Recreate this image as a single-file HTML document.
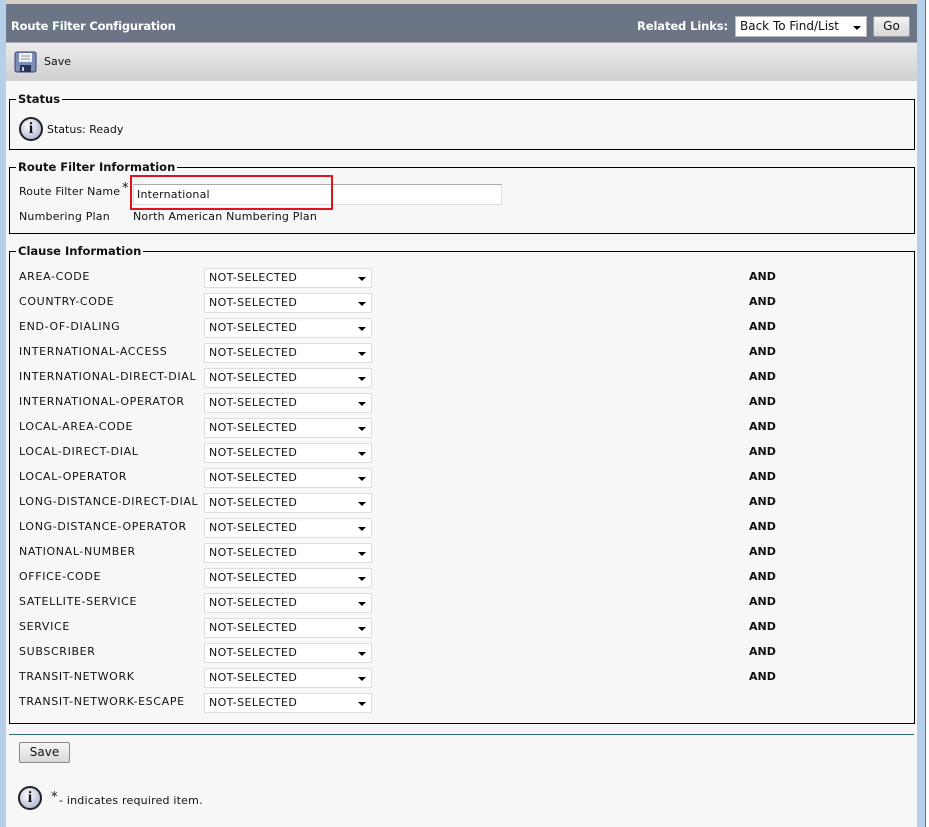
<!DOCTYPE html>
<html><head><meta charset="utf-8"><style>
*{margin:0;padding:0;box-sizing:border-box}
body{width:929px;height:827px;position:relative;background:#f7f7f7;font-family:"DejaVu Sans","Liberation Sans",sans-serif;font-size:11px;color:#111;overflow:hidden}
.a{position:absolute;white-space:nowrap}
.fs{position:absolute;border:1px solid #000}
.lg{position:absolute;top:-8px;left:6px;background:#f7f7f7;padding:0 2px;font-weight:bold;font-size:11.5px;line-height:14px}
.sel{position:absolute;left:204px;width:168px;height:20px;background:#fff;border:1px solid #ddd;font-size:11px;line-height:18px;padding-left:4px;letter-spacing:.4px}
.sel:after{content:"";position:absolute;right:5px;top:8px;border-left:4px solid transparent;border-right:4px solid transparent;border-top:4px solid #000}
.lb{position:absolute;left:19px;font-size:11px;letter-spacing:.65px}
.and{position:absolute;left:749px;font-weight:bold;font-size:11px}
.info{position:absolute;width:24px;height:24px;border-radius:50%;border:2px solid #222;background:radial-gradient(circle at 40% 35%,#fff,#b8bfd8 70%,#8a93b8);font:bold 16px "Liberation Serif",serif;text-align:center;line-height:20px;color:#111}
</style></head><body>
<div class="a" style="left:0;top:0;width:929px;height:4px;background:#d6d2c8"></div>
<div class="a" style="left:0;top:0;width:6px;height:827px;background:#b7d0ea"></div>
<div class="a" style="left:917px;top:0;width:8px;height:827px;background:#b7d0ea"></div>
<div class="a" style="left:925px;top:0;width:1px;height:827px;background:#1b8fb0"></div>
<div class="a" style="left:926px;top:0;width:3px;height:827px;background:#fff"></div>
<div class="a" style="left:6px;top:4px;width:911px;height:38px;background:#6b7585"></div>
<div class="a" style="left:11px;top:19px;color:#fff;font-weight:bold;font-size:11.5px;letter-spacing:-.2px">Route Filter Configuration</div>
<div class="a" style="left:637px;top:19px;color:#fff;font-weight:bold;font-size:11.5px;letter-spacing:-.1px">Related Links:</div>
<div class="a" style="left:735px;top:16px;width:132px;height:21px;background:#fff;border:1px solid #bbb;font-size:12px;line-height:19px;padding-left:4px">Back To Find/List<span style="position:absolute;right:5px;top:9px;border-left:4px solid transparent;border-right:4px solid transparent;border-top:4px solid #000"></span></div>
<div class="a" style="left:873px;top:16px;width:37px;height:21px;background:linear-gradient(#f4f4f4,#d8d8d8);border:1px solid #999;border-radius:2px;text-align:center;line-height:19px;font-size:12px">Go</div>
<div class="a" style="left:6px;top:42px;width:911px;height:1px;background:#aab"></div>
<div class="a" style="left:6px;top:43px;width:911px;height:38px;background:linear-gradient(#ececec,#cfcfcf)"></div>
<svg class="a" style="left:14px;top:51px" width="23" height="22" viewBox="0 0 23 22"><rect x="1" y="1" width="21" height="20" rx="2" fill="#7f8eb5" stroke="#34406a"/><rect x="5" y="2" width="13" height="9" fill="#eef0f5"/><line x1="7" y1="5" x2="16" y2="5" stroke="#999"/><line x1="7" y1="8" x2="16" y2="8" stroke="#999"/><rect x="6" y="14" width="11" height="7" fill="#2a3458"/><rect x="8" y="16" width="2" height="4" fill="#ccd"/></svg>
<div class="a" style="left:44px;top:55px">Save</div>

<div class="fs" style="left:9px;top:99px;width:906px;height:51px"><div class="lg">Status</div></div>
<div class="info" style="left:19px;top:117px">i</div>
<div class="a" style="left:47px;top:123px">Status: Ready</div>

<div class="fs" style="left:9px;top:167px;width:906px;height:67px"><div class="lg">Route Filter Information</div></div>
<div class="a" style="left:19px;top:185px;letter-spacing:.15px">Route Filter Name</div>
<div class="a" style="left:122px;top:181px;font-size:13px">*</div>
<div class="a" style="left:133px;top:184px;width:369px;height:21px;background:#fff;border:1px solid #ddd;border-top-color:#aaa"></div>
<div class="a" style="left:130px;top:175px;width:203px;height:35px;border:2px solid #e0141e"></div>
<div class="a" style="left:137px;top:188px;letter-spacing:.2px">International</div>
<div class="a" style="left:19px;top:210px;letter-spacing:.2px">Numbering Plan</div>
<div class="a" style="left:133px;top:210px;letter-spacing:.2px">North American Numbering Plan</div>

<div class="fs" style="left:9px;top:251px;width:906px;height:473px"><div class="lg">Clause Information</div></div>
<div id="rows"></div>
<script>
var L=["AREA-CODE","COUNTRY-CODE","END-OF-DIALING","INTERNATIONAL-ACCESS","INTERNATIONAL-DIRECT-DIAL","INTERNATIONAL-OPERATOR","LOCAL-AREA-CODE","LOCAL-DIRECT-DIAL","LOCAL-OPERATOR","LONG-DISTANCE-DIRECT-DIAL","LONG-DISTANCE-OPERATOR","NATIONAL-NUMBER","OFFICE-CODE","SATELLITE-SERVICE","SERVICE","SUBSCRIBER","TRANSIT-NETWORK","TRANSIT-NETWORK-ESCAPE"],h="";
for(var i=0;i<L.length;i++){var y=268+25*i;h+='<div class="lb" style="top:'+(y+2)+'px">'+L[i]+'</div><div class="sel" style="top:'+y+'px">NOT-SELECTED</div>'+(i<17?'<div class="and" style="top:'+(y+2)+'px">AND</div>':'');}
document.getElementById("rows").innerHTML=h;
</script>
<div class="a" style="left:9px;top:734px;width:905px;height:1px;background:#2d6a6a"></div>
<div class="a" style="left:19px;top:742px;width:51px;height:21px;background:linear-gradient(#f6f6f6,#d9d9d9);border:1px solid #888;border-radius:2px;text-align:center;line-height:19px;font-size:12px">Save</div>
<div class="info" style="left:18px;top:786px">i</div>
<div class="a" style="left:51px;top:790px;font-size:13px">*</div>
<div class="a" style="left:59px;top:794px;letter-spacing:.2px">- indicates required item.</div>
</body></html>
